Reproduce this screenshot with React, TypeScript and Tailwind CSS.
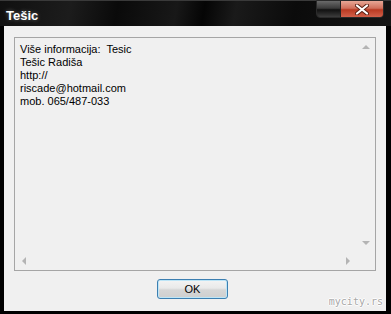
const lines = ['Više informacija:  Tesic', 'Tešic Radiša', 'http://', 'riscade@hotmail.com', 'mob. 065/487-033'];

const Arrow = ({ dir }: { dir: 'up' | 'down' | 'left' | 'right' }) => {
  const pts = {
    up: '0,4 4,0 8,4',
    down: '0,0 8,0 4,4',
    left: '4,0 4,8 0,4',
    right: '0,0 0,8 4,4',
  }[dir];
  const vertical = dir === 'up' || dir === 'down';
  return (
    <svg width={vertical ? 8 : 4} height={vertical ? 4 : 8} viewBox={vertical ? '0 0 8 4' : '0 0 4 8'}>
      <polygon points={pts} fill="#b4b4b4" />
    </svg>
  );
};

const App = () => {
  return (
    <div className="relative w-[391px] h-[314px] overflow-hidden bg-black flex flex-col font-['Liberation_Sans',sans-serif]">
      {/* title bar */}
      <div className="h-[26px] shrink-0 flex justify-between border-t border-[#3a3a3a] pl-[6px] pr-[7px] bg-[linear-gradient(100deg,#101010_0%,#1c1c1c_18%,#0a0a0a_30%,#181818_45%,#050505_52%,#1a1a1a_60%,#0b0b0b_75%,#151515_100%)]">
        <span className="pt-[5px] text-[13px] font-bold text-white [text-shadow:0_0_4px_rgba(255,255,255,0.35)]">
          Tešic
        </span>
        <div className="-mt-px flex h-[18px] rounded-b-[4px] border border-[#2a2a2a] overflow-hidden">
          <div className="w-[24px] bg-[linear-gradient(#6a6a6a,#3a3a3a_45%,#111_55%,#3c3c3c)] border-r border-[#222]" />
          <div className="w-[42px] flex items-center justify-center bg-[linear-gradient(#e7a796,#d0705c_45%,#b93a22_55%,#d2604a)]">
            <svg width="14" height="11" viewBox="0 0 14 11">
              <path d="M2 1.5 L12 9.5 M12 1.5 L2 9.5" stroke="#5a2014" strokeWidth="4" strokeLinecap="round" />
              <path d="M2 1.5 L12 9.5 M12 1.5 L2 9.5" stroke="#ffffff" strokeWidth="2.2" strokeLinecap="round" />
            </svg>
          </div>
        </div>
      </div>

      {/* client area */}
      <div className="flex-1 ml-[4px] mr-[5px] mb-[3px] bg-[#f0f0f0] flex flex-col pt-[11px] px-[10px]">
        <div className="h-[234px] border border-[#a5a5a5] bg-[#f0f0f0] flex flex-col">
          <div className="flex-1 flex">
            <div className="flex-1 pl-[5px] pt-[5px] text-[11px] leading-[13px] text-black">
              {lines.map((l) => (
                <div key={l} className="whitespace-pre">{l}</div>
              ))}
            </div>
            <div className="w-[18px] flex flex-col items-center justify-between pt-[7px] pb-[7px]">
              <Arrow dir="up" />
              <Arrow dir="down" />
            </div>
          </div>
          <div className="h-[18px] flex">
            <div className="flex-1 flex items-center justify-between px-[7px]">
              <Arrow dir="left" />
              <Arrow dir="right" />
            </div>
            <div className="w-[18px]" />
          </div>
        </div>
        <div className="flex justify-center pr-[5px] mt-[8px]">
          <button className="w-[71px] h-[20px] rounded-[3px] border border-[#3c7fb1] bg-[linear-gradient(#f4f4f4,#e9e9e9_45%,#d6d6d6_55%,#cfcfcf)] shadow-[inset_0_0_0_1px_#bde5f7] text-[11px] text-black">
            OK
          </button>
        </div>
      </div>

      <span className="absolute right-[8px] bottom-[7px] text-[10px] leading-[10px] font-['DejaVu_Sans_Mono',monospace] text-[#a8a8a8] [text-shadow:1px_0_0_#fff,-1px_0_0_#fff,0_1px_0_#fff,0_-1px_0_#fff]">
        mycity.rs
      </span>
    </div>
  );
};

export default App;
